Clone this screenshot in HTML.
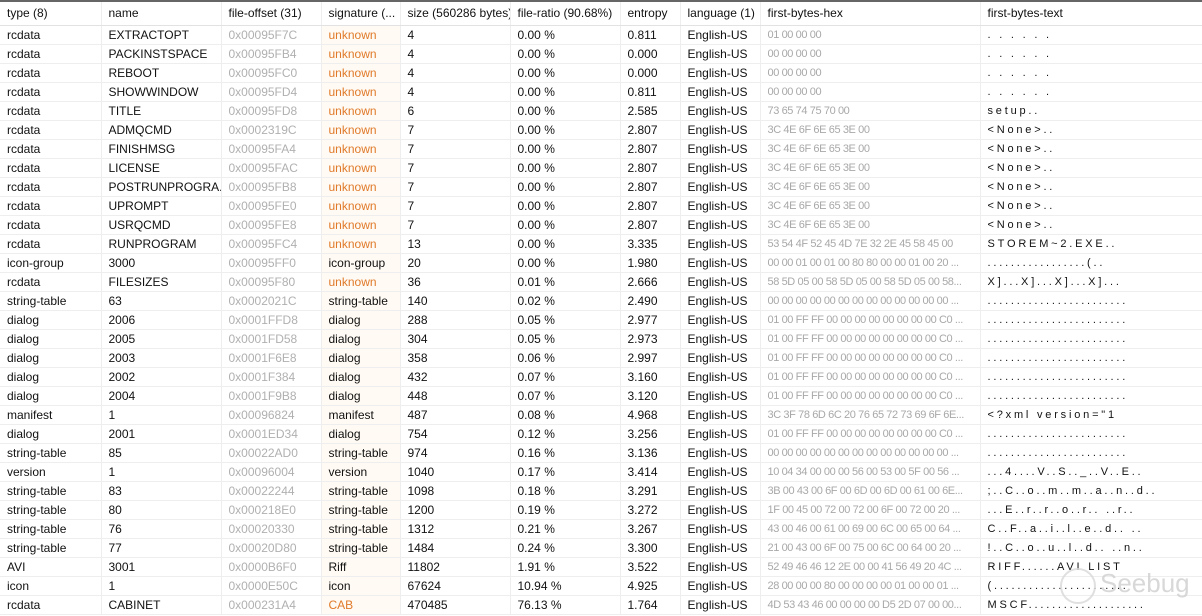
<!DOCTYPE html><html><head><meta charset="utf-8"><style>
body{margin:0;width:1202px;height:616px;overflow:hidden;background:#fff;font-family:"Liberation Sans",sans-serif;font-size:12px;color:#111}
table{border-collapse:collapse;table-layout:fixed;width:1202px;border-top:2px solid #666}
td,th{height:18px;padding:0 0 0 7px;white-space:nowrap;overflow:hidden;border-bottom:1px solid #eeeeee;border-right:1px solid #eeeeee;font-weight:normal;text-align:left;line-height:18px}
th{height:23px;line-height:23px;border-bottom:1px solid #e2e2e2}
td:nth-child(3){color:#b0b0b0}
td:nth-child(4){background:#fffaf3}
td:nth-child(9){color:#a8a8a8;font-size:11px;letter-spacing:-0.4px;text-overflow:clip}
td:nth-child(10){letter-spacing:2.8px;font-size:11px}
.u{color:#e07a2a}
</style></head><body><table>
<colgroup><col style="width:101px"><col style="width:120px"><col style="width:100px"><col style="width:79px"><col style="width:110px"><col style="width:110px"><col style="width:60px"><col style="width:80px"><col style="width:220px"><col style="width:222px"></colgroup>
<tr><th>type (8)</th><th>name</th><th>file-offset (31)</th><th>signature (...</th><th>size (560286 bytes)</th><th>file-ratio (90.68%)</th><th>entropy</th><th>language (1)</th><th>first-bytes-hex</th><th>first-bytes-text</th></tr>
<tr><td>rcdata</td><td>EXTRACTOPT</td><td>0x00095F7C</td><td class="u">unknown</td><td>4</td><td>0.00 %</td><td>0.811</td><td>English-US</td><td>01 00 00 00</td><td>. . . . . .</td></tr>
<tr><td>rcdata</td><td>PACKINSTSPACE</td><td>0x00095FB4</td><td class="u">unknown</td><td>4</td><td>0.00 %</td><td>0.000</td><td>English-US</td><td>00 00 00 00</td><td>. . . . . .</td></tr>
<tr><td>rcdata</td><td>REBOOT</td><td>0x00095FC0</td><td class="u">unknown</td><td>4</td><td>0.00 %</td><td>0.000</td><td>English-US</td><td>00 00 00 00</td><td>. . . . . .</td></tr>
<tr><td>rcdata</td><td>SHOWWINDOW</td><td>0x00095FD4</td><td class="u">unknown</td><td>4</td><td>0.00 %</td><td>0.811</td><td>English-US</td><td>00 00 00 00</td><td>. . . . . .</td></tr>
<tr><td>rcdata</td><td>TITLE</td><td>0x00095FD8</td><td class="u">unknown</td><td>6</td><td>0.00 %</td><td>2.585</td><td>English-US</td><td>73 65 74 75 70 00</td><td>setup..</td></tr>
<tr><td>rcdata</td><td>ADMQCMD</td><td>0x0002319C</td><td class="u">unknown</td><td>7</td><td>0.00 %</td><td>2.807</td><td>English-US</td><td>3C 4E 6F 6E 65 3E 00</td><td>&lt;None&gt;..</td></tr>
<tr><td>rcdata</td><td>FINISHMSG</td><td>0x00095FA4</td><td class="u">unknown</td><td>7</td><td>0.00 %</td><td>2.807</td><td>English-US</td><td>3C 4E 6F 6E 65 3E 00</td><td>&lt;None&gt;..</td></tr>
<tr><td>rcdata</td><td>LICENSE</td><td>0x00095FAC</td><td class="u">unknown</td><td>7</td><td>0.00 %</td><td>2.807</td><td>English-US</td><td>3C 4E 6F 6E 65 3E 00</td><td>&lt;None&gt;..</td></tr>
<tr><td>rcdata</td><td>POSTRUNPROGRA...</td><td>0x00095FB8</td><td class="u">unknown</td><td>7</td><td>0.00 %</td><td>2.807</td><td>English-US</td><td>3C 4E 6F 6E 65 3E 00</td><td>&lt;None&gt;..</td></tr>
<tr><td>rcdata</td><td>UPROMPT</td><td>0x00095FE0</td><td class="u">unknown</td><td>7</td><td>0.00 %</td><td>2.807</td><td>English-US</td><td>3C 4E 6F 6E 65 3E 00</td><td>&lt;None&gt;..</td></tr>
<tr><td>rcdata</td><td>USRQCMD</td><td>0x00095FE8</td><td class="u">unknown</td><td>7</td><td>0.00 %</td><td>2.807</td><td>English-US</td><td>3C 4E 6F 6E 65 3E 00</td><td>&lt;None&gt;..</td></tr>
<tr><td>rcdata</td><td>RUNPROGRAM</td><td>0x00095FC4</td><td class="u">unknown</td><td>13</td><td>0.00 %</td><td>3.335</td><td>English-US</td><td>53 54 4F 52 45 4D 7E 32 2E 45 58 45 00</td><td>STOREM~2.EXE..</td></tr>
<tr><td>icon-group</td><td>3000</td><td>0x00095FF0</td><td>icon-group</td><td>20</td><td>0.00 %</td><td>1.980</td><td>English-US</td><td>00 00 01 00 01 00 80 80 00 00 01 00 20 ...</td><td>.................(..</td></tr>
<tr><td>rcdata</td><td>FILESIZES</td><td>0x00095F80</td><td class="u">unknown</td><td>36</td><td>0.01 %</td><td>2.666</td><td>English-US</td><td>58 5D 05 00 58 5D 05 00 58 5D 05 00 58...</td><td>X]...X]...X]...X]...</td></tr>
<tr><td>string-table</td><td>63</td><td>0x0002021C</td><td>string-table</td><td>140</td><td>0.02 %</td><td>2.490</td><td>English-US</td><td>00 00 00 00 00 00 00 00 00 00 00 00 00 ...</td><td>........................</td></tr>
<tr><td>dialog</td><td>2006</td><td>0x0001FFD8</td><td>dialog</td><td>288</td><td>0.05 %</td><td>2.977</td><td>English-US</td><td>01 00 FF FF 00 00 00 00 00 00 00 00 C0 ...</td><td>........................</td></tr>
<tr><td>dialog</td><td>2005</td><td>0x0001FD58</td><td>dialog</td><td>304</td><td>0.05 %</td><td>2.973</td><td>English-US</td><td>01 00 FF FF 00 00 00 00 00 00 00 00 C0 ...</td><td>........................</td></tr>
<tr><td>dialog</td><td>2003</td><td>0x0001F6E8</td><td>dialog</td><td>358</td><td>0.06 %</td><td>2.997</td><td>English-US</td><td>01 00 FF FF 00 00 00 00 00 00 00 00 C0 ...</td><td>........................</td></tr>
<tr><td>dialog</td><td>2002</td><td>0x0001F384</td><td>dialog</td><td>432</td><td>0.07 %</td><td>3.160</td><td>English-US</td><td>01 00 FF FF 00 00 00 00 00 00 00 00 C0 ...</td><td>........................</td></tr>
<tr><td>dialog</td><td>2004</td><td>0x0001F9B8</td><td>dialog</td><td>448</td><td>0.07 %</td><td>3.120</td><td>English-US</td><td>01 00 FF FF 00 00 00 00 00 00 00 00 C0 ...</td><td>........................</td></tr>
<tr><td>manifest</td><td>1</td><td>0x00096824</td><td>manifest</td><td>487</td><td>0.08 %</td><td>4.968</td><td>English-US</td><td>3C 3F 78 6D 6C 20 76 65 72 73 69 6F 6E...</td><td>&lt;?xml version="1</td></tr>
<tr><td>dialog</td><td>2001</td><td>0x0001ED34</td><td>dialog</td><td>754</td><td>0.12 %</td><td>3.256</td><td>English-US</td><td>01 00 FF FF 00 00 00 00 00 00 00 00 C0 ...</td><td>........................</td></tr>
<tr><td>string-table</td><td>85</td><td>0x00022AD0</td><td>string-table</td><td>974</td><td>0.16 %</td><td>3.136</td><td>English-US</td><td>00 00 00 00 00 00 00 00 00 00 00 00 00 ...</td><td>........................</td></tr>
<tr><td>version</td><td>1</td><td>0x00096004</td><td>version</td><td>1040</td><td>0.17 %</td><td>3.414</td><td>English-US</td><td>10 04 34 00 00 00 56 00 53 00 5F 00 56 ...</td><td>...4....V..S.._..V..E..</td></tr>
<tr><td>string-table</td><td>83</td><td>0x00022244</td><td>string-table</td><td>1098</td><td>0.18 %</td><td>3.291</td><td>English-US</td><td>3B 00 43 00 6F 00 6D 00 6D 00 61 00 6E...</td><td>;..C..o..m..m..a..n..d..</td></tr>
<tr><td>string-table</td><td>80</td><td>0x000218E0</td><td>string-table</td><td>1200</td><td>0.19 %</td><td>3.272</td><td>English-US</td><td>1F 00 45 00 72 00 72 00 6F 00 72 00 20 ...</td><td>...E..r..r..o..r.. ..r..</td></tr>
<tr><td>string-table</td><td>76</td><td>0x00020330</td><td>string-table</td><td>1312</td><td>0.21 %</td><td>3.267</td><td>English-US</td><td>43 00 46 00 61 00 69 00 6C 00 65 00 64 ...</td><td>C..F..a..i..l..e..d.. ..</td></tr>
<tr><td>string-table</td><td>77</td><td>0x00020D80</td><td>string-table</td><td>1484</td><td>0.24 %</td><td>3.300</td><td>English-US</td><td>21 00 43 00 6F 00 75 00 6C 00 64 00 20 ...</td><td>!..C..o..u..l..d.. ..n..</td></tr>
<tr><td>AVI</td><td>3001</td><td>0x0000B6F0</td><td>Riff</td><td>11802</td><td>1.91 %</td><td>3.522</td><td>English-US</td><td>52 49 46 46 12 2E 00 00 41 56 49 20 4C ...</td><td>RIFF......AVI LIST</td></tr>
<tr><td>icon</td><td>1</td><td>0x0000E50C</td><td>icon</td><td>67624</td><td>10.94 %</td><td>4.925</td><td>English-US</td><td>28 00 00 00 80 00 00 00 00 01 00 00 01 ...</td><td>(.......................</td></tr>
<tr><td>rcdata</td><td>CABINET</td><td>0x000231A4</td><td class="u">CAB</td><td>470485</td><td>76.13 %</td><td>1.764</td><td>English-US</td><td>4D 53 43 46 00 00 00 00 D5 2D 07 00 00...</td><td>MSCF....................</td></tr>
</table>
<div style="position:absolute;left:1060px;top:568px;width:32px;height:32px;border:2px solid #d8d8d8;border-radius:50%;opacity:.8"></div>
<div style="position:absolute;left:1100px;top:568px;color:#cfcfcf;font-size:26px;opacity:.8">Seebug</div>
</body></html>
